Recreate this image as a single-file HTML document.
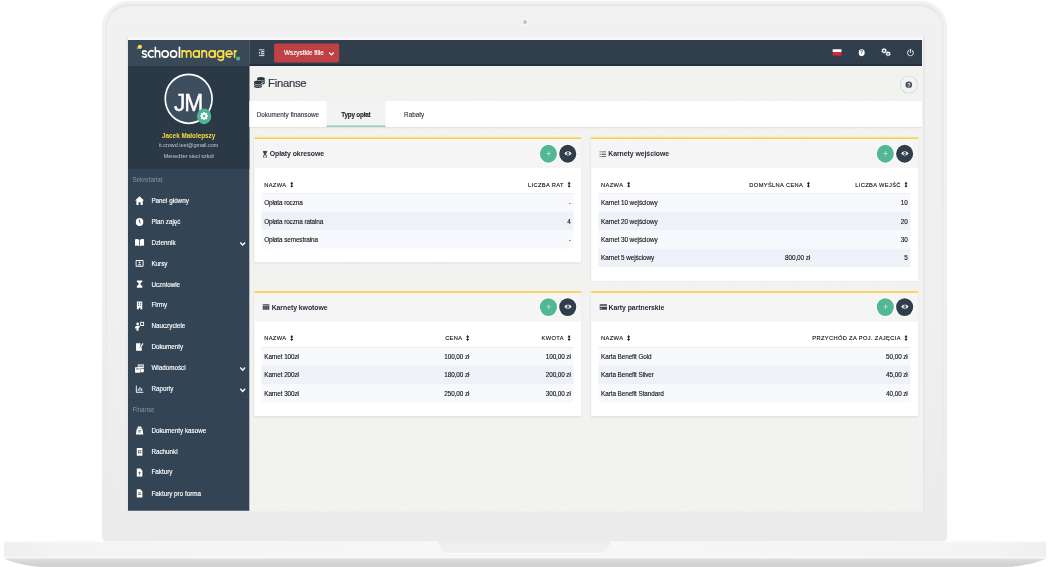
<!DOCTYPE html>
<html lang="pl">
<head>
<meta charset="utf-8">
<title>School Manager - Finanse</title>
<style>
*{box-sizing:border-box;margin:0;padding:0}
html,body{width:1050px;height:567px;overflow:hidden;background:#fff;font-family:"Liberation Sans",sans-serif}
#stage{position:relative;width:1050px;height:567px;overflow:hidden;background:#fff}
/* ---------- laptop frame ---------- */
#lid{position:absolute;left:102.2px;top:1.3px;width:844.6px;height:540.7px;border-radius:27px 27px 6px 6px;background:linear-gradient(#f1f1f1 0,#f0f0f0 55%,#ebebeb 100%);box-shadow:0 0 1.2px rgba(0,0,0,.08)}
#lid:before{content:"";position:absolute;left:2.8px;top:2.6px;right:2.8px;bottom:-4px;border-radius:24.5px 24.5px 0 0;border:2.3px solid #ebebeb;border-top-color:#e7e7e7;border-bottom:0}
#glass{position:absolute;left:125.6px;top:36px;width:799px;height:474.6px;background:linear-gradient(90deg,#e8e8e8 0,#e8e8e8 2.6px,#f4f4f4 2.6px,#f4f4f4 796.8px,#e7e7e7 796.8px,#e7e7e7 100%)}
#glassB{position:absolute;left:128px;top:510.6px;width:794.5px;height:1.9px;background:#eeeeee}
#cam{position:absolute;left:522.7px;top:19.5px;width:4.8px;height:4.8px;border-radius:50%;background:#c4c4c4;box-shadow:0 0 0 1.6px #f7f7f7}
#screenEdge{position:absolute;left:128px;top:38.3px;width:794.4px;height:3px;background:#f8f8f8}
#baseSvg{position:absolute;left:0;top:540px;width:1050px;height:27px}
/* ---------- screen ---------- */
#screen{position:absolute;left:128px;top:40px;width:794.4px;height:470.7px;overflow:hidden;background:#f2f2f1}
#app{position:absolute;left:0;top:0;width:1440px;height:817.42px;transform-origin:0 0;transform:scale(0.551389,0.576201);filter:contrast(1.0001);color:#333;font-size:13px}
/* ---------- sidebar ---------- */
#side{position:absolute;left:0;top:0;width:220px;height:817.42px;background:#334454}
#logo{position:absolute;left:0;top:0;width:220px;height:44.78px;background:#3a4958;box-shadow:inset 0 -2.5px 0 #3c4c5c}
#prof{position:absolute;left:0;top:44.78px;width:220px;height:178.58px;background:#2b3845;text-align:center;border-bottom:1.5px dashed #243140}
#av{position:absolute;left:65.65px;top:13.19px;width:88.69px;height:88.51px;border-radius:50%;border:3px solid #fff;background:#3d4e5e;color:#fff;font-size:41.5px;line-height:95.01px;text-align:center;letter-spacing:-2.3px;text-indent:-2px;-webkit-text-stroke:0.7px #fff}
#gear{position:absolute;left:124.96px;top:73.93px;width:26.12px;height:26.9px;border-radius:50%;background:#4eb592}
#gear svg{position:absolute;left:5px;top:5.5px;width:16px;height:16px}
#prof .n{position:absolute;left:0;width:220px;top:113.66px;font-size:11.5px;line-height:16px;font-weight:bold;color:#f8dc42}
#prof .e{position:absolute;left:0;width:220px;top:131.15px;font-size:9.85px;line-height:14px;color:#c4ccd3}
#prof .r{position:absolute;left:0;width:220px;top:150.41px;font-size:9.75px;line-height:14px;color:#c4ccd3}
#nav{position:absolute;left:0;top:224.57px;width:220px}
#nav .lab{height:36.27px;line-height:37.47px;padding-left:8px;font-size:11.3px;color:#8694a1}
#nav .it{position:relative;height:36.27px;line-height:37.87px;padding-left:42.5px;font-size:11.4px;color:#fff;-webkit-text-stroke:0.25px #fff;box-shadow:inset 0 1px 0 rgba(0,0,0,.055)}
#nav .it svg.ic{position:absolute;left:13px;top:10.54px;width:16px;height:15.6px;fill:#fff}
#nav .it svg.ic.big{left:12px;top:9.64px;width:18px;height:17.5px}
#nav .it svg.ch{position:absolute;left:201.8px;top:14.54px;width:12px;height:11.5px}
/* ---------- topbar ---------- */
#top{position:absolute;left:220px;top:0;width:1220px;height:44.78px;background:#313f4d;box-shadow:inset 0 -3px 0 #222f3e}
#top .ham{position:absolute;left:17.04px;top:15.62px;width:10.52px;height:12.32px}
#top .btn{position:absolute;left:44.79px;top:6.42px;width:117.88px;height:32.11px;border-radius:3px;background:#bf4144;color:#fff;-webkit-text-stroke:0.25px #fff;font-size:11.5px;line-height:32.71px;padding-left:18.14px;white-space:nowrap}
#top .btn svg{position:absolute;left:98.64px;top:11.45px;width:12px;height:11.5px}
#top .flag{position:absolute;left:1058.41px;top:15.62px;width:15.42px;height:11.8px;background:linear-gradient(#fff 0,#fff 50%,#d8283a 50%,#d8283a 100%)}
#top .q{position:absolute;left:1104.56px;top:16.34px;width:11.8px;height:11.4px;border-radius:50%;background:#fff;color:#313f4d;font-size:9px;font-weight:bold;line-height:12px;text-align:center}
#top .cog{position:absolute;left:1145.71px;top:14.37px;width:18px;height:15px}
#top .pow{position:absolute;left:1191.96px;top:14.99px;width:14px;height:13.4px}

/* ---------- main ---------- */
#main{position:absolute;left:220px;top:44.78px;width:1220px;height:772.65px}
#noise{position:absolute;left:121px;top:25px;width:673px;height:446px}
#head svg.hi{position:absolute;left:8.15px;top:19.09px;width:20.68px;height:21.52px}
#head .ht{position:absolute;left:34.09px;top:16.37px;font-size:20.5px;line-height:28px;color:#2f3742;-webkit-text-stroke:0.3px #2f3742;letter-spacing:-0.5px;white-space:nowrap}
#head .hb{position:absolute;left:1180.24px;top:17.2px;width:32px;height:31.2px;border-radius:50%;border:1px solid #c9cdd1;background:#f3f3f3}
#head .hb i{position:absolute;left:9px;top:8.8px;width:12px;height:11.6px;border-radius:50%;background:#4a5563;color:#f3f3f3;font-style:normal;font-size:9px;font-weight:bold;line-height:12px;text-align:center}
#tabs{position:absolute;left:0;top:60.92px;width:1220px;height:44.95px;background:#fff;box-shadow:0 1px 2px rgba(0,0,0,.08)}
#tabs .tb{position:absolute;top:0;height:44.95px;line-height:46.15px;font-size:11.5px;color:#2b323d;-webkit-text-stroke:0.2px #2b323d;text-align:center;white-space:nowrap}
#tabs .tb.a{background:#f3f3f3;color:#222;border-bottom:3px solid #9ad4c1;font-weight:bold;letter-spacing:-0.4px}

.card{position:absolute;width:592.5px;background:#fff;border-top:3.04px solid #f7cf48;box-shadow:0 1px 3px rgba(0,0,0,.13)}
.card .ch{position:relative;height:49.81px;background:#f5f5f6}
.card .ch .ct{position:absolute;left:15px;top:0;line-height:53.01px;font-size:12.5px;font-weight:bold;color:#252c37;white-space:nowrap;letter-spacing:-0.1px}
.card .ch svg.ci{display:inline-block;height:12.5px;margin-right:4px;vertical-align:-2px;fill:#3a4350}
.card .ch .bg,.card .ch .bd{position:absolute;top:9.14px;width:31px;height:31px;border-radius:50%;box-shadow:0 0 0 2px rgba(255,255,255,.75)}
.card .ch .bg{left:518.06px;background:#52b894}
.card .ch .bd{left:553.06px;background:#2f3d4c}
.card .ch .bg svg,.card .ch .bd svg{position:absolute;left:8.5px;top:8.5px;width:14px;height:14px}
.card table{position:absolute;left:13px;top:49.81px;width:566px;border-collapse:collapse;table-layout:fixed}
.card th{height:44.78px;padding:13.64px 5px 0 5px;font-size:10.4px;font-weight:normal;letter-spacing:0.63px;color:#111;-webkit-text-stroke:0.2px #111;text-align:left;border-bottom:1px solid #dfe4ec;white-space:nowrap;vertical-align:middle}
.card td{height:31.76px;padding:0 5px 0.9px 5px;font-size:11.6px;letter-spacing:-0.18px;color:#111;-webkit-text-stroke:0.2px #111;white-space:nowrap;vertical-align:middle}
.card .st{position:absolute;left:13px;width:566px;height:31.76px}
.card .st.o{background:#f8f9fc}
.card .st.e{background:#eef1f8}
.card .r{text-align:right}
.card th svg{display:inline-block;width:6px;height:10.5px;margin-left:6.5px;vertical-align:-1.5px}
</style>
</head>
<body>
<div id="stage">
  <div id="lid"></div>
  <div id="glass"></div>
  <div id="glassB"></div>
  <div id="cam"></div>
  <svg id="baseSvg" viewBox="0 540 1050 27">
    <defs>
      <linearGradient id="gFace" x1="0" x2="1" y1="0" y2="0"><stop offset="0" stop-color="#efefef"/><stop offset="0.060" stop-color="#f4f4f4"/><stop offset="0.500" stop-color="#f7f7f7"/><stop offset="0.940" stop-color="#f4f4f4"/><stop offset="1" stop-color="#efefef"/></linearGradient>
      <linearGradient id="gUnder" gradientUnits="userSpaceOnUse" x1="0" x2="0" y1="558.300" y2="567"><stop offset="0" stop-color="#e2e2e2"/><stop offset="0.250" stop-color="#dadada"/><stop offset="0.850" stop-color="#cfcfcf"/><stop offset="1" stop-color="#d8d8d8"/></linearGradient>
      <linearGradient id="gNotch" x1="0" x2="0" y1="0" y2="1"><stop offset="0" stop-color="#e9e9e9"/><stop offset="0.250" stop-color="#efefef"/><stop offset="1" stop-color="#f1f1f1"/></linearGradient>
    </defs>
    <path d="M4 541.600H1046V559H4z" fill="url(#gFace)"/>
    <path d="M4 541.600H1046V542.600H4z" fill="#fafafa"/>
    <path d="M4 557H1046V558.600H4z" fill="#fbfbfb"/>
    <path d="M4 558.300C10 562 24 565.500 44 567.500H1006C1026 565.500 1040 562 1046 558.300z" fill="url(#gUnder)"/>
    <path d="M439 541.600H610V545C610 550 606 553 600 553H449C443 553 439 550 439 545z" fill="url(#gNotch)"/>
    <path d="M439.500 545C439.500 550 443.500 553.300 449 553.300H600C605.500 553.300 609.500 550 609.500 545" fill="none" stroke="#fbfbfb" stroke-width="1"/>
  </svg>
  <div id="screenEdge"></div>
  <div id="screen">
    <svg id="noise"><filter id="nf" x="0" y="0" width="100%" height="100%"><feTurbulence type="fractalNoise" baseFrequency="0.550" numOctaves="2" seed="7"/><feColorMatrix type="matrix" values="0 0 0 0 0.800  0 0 0 0 0.800  0 0 0 0 0.790  2.000 0 0 0 -1.260"/></filter><rect width="100%" height="100%" filter="url(#nf)"/></svg>
    <div id="app">
      <div id="side">
        <div id="logo"></div>
        <div id="prof">
          <div id="av">JM</div>
          <div id="gear"><svg viewBox="0 0 16 16"><path fill="#fff" d="M6.800 1h2.400l.35 1.700 1.100.46 1.450-.95 1.700 1.700-.95 1.450.46 1.100L15 6.800v2.400l-1.700.35-.46 1.100.95 1.450-1.700 1.700-1.450-.95-1.100.46L9.200 15H6.800l-.35-1.700-1.100-.46-1.450.95-1.700-1.700.95-1.450-.46-1.100L1 9.200V6.800l1.700-.35.46-1.100-.95-1.450 1.700-1.700 1.450.95 1.100-.46z"/><circle cx="8" cy="8" r="2.400" fill="#4eb592"/></svg></div>
          <div class="n">Jacek Małolepszy</div>
          <div class="e">it.crowd.test@gmail.com</div>
          <div class="r">Menedżer sieci szkół</div>
        </div>
        <div id="nav">
          <div class="lab">Sekretariat</div>
          <div class="it"><svg class="ic big" viewBox="0 0 16 16"><path d="M8 1.200 15.500 8h-2.200v6.800H9.600v-4.300H6.400v4.300H2.700V8H.5z"/></svg>Panel główny</div>
          <div class="it"><svg class="ic" viewBox="0 0 16 16"><circle cx="8" cy="8" r="7"/><path d="M7.600 3.800v4.600l3 1.800" stroke="#334454" stroke-width="1.600" fill="none"/></svg>Plan zajęć</div>
          <div class="it"><svg class="ic big" viewBox="0 0 16 16"><path d="M.5 2.800c2.700-.9 4.800-.7 6.900.6v10.400C5.300 12.500 3.200 12.300.5 13.200zM15.500 2.800c-2.700-.9-4.800-.7-6.900.6v10.400c2.100-1.300 4.200-1.500 6.900-.6z"/></svg>Dziennik<svg class="ch" viewBox="0 0 11 11"><path d="M1.300 3.200 5.500 7.600 9.700 3.200" stroke="#fff" stroke-width="2.300" fill="none"/></svg></div>
          <div class="it"><svg class="ic" viewBox="0 0 16 16"><path d="M2.500 2h11A2 2 0 0 1 15.500 4v8a2 2 0 0 1-2 2h-11A2 2 0 0 1 .5 12V4A2 2 0 0 1 2.500 2z"/><path d="M2.300 3.800h11.400v8.400H2.300z" fill="#334454"/><circle cx="8" cy="6.300" r="1.700"/><path d="M4.600 11.200c.3-2.600 6.500-2.600 6.800 0z"/></svg>Kursy</div>
          <div class="it"><svg class="ic" viewBox="0 0 16 16"><path d="M3 1.500h10v3H11L9.500 7.500 11 10.500h2v4H3v-4h2l1.500-3L5 4.500H3z"/></svg>Uczniowie</div>
          <div class="it"><svg class="ic" viewBox="0 0 16 16"><path d="M3 1h10v14H9.500v-2.800h-3V15H3z"/><path d="M5 3.200h2v1.800H5zM9 3.200h2v1.800H9zM5 6.600h2v1.800H5zM9 6.600h2v1.800H9z" fill="#334454"/></svg>Firmy</div>
          <div class="it"><svg class="ic big" viewBox="0 0 16 16"><path d="M9 1h6.500v6.500H9zm1.500 1.500v3.500h3.500V2.500z"/><circle cx="4.800" cy="4.300" r="2.200"/><path d="M.5 9.800c0-3.300 8.500-3.300 8.500-1l-2.700 2V15H3v-3.500H.5z"/></svg>Nauczyciele</div>
          <div class="it"><svg class="ic" viewBox="0 0 16 16"><path d="M1.500 1.500h8v5l-2 3.500 3.500-.5 1-1.500v6.500H1.500z"/><path d="M15.300 2.300 10.500 9.500l-2 .9.300-2.100L13.500 1z"/></svg>Dokumenty</div>
          <div class="it"><svg class="ic big" viewBox="0 0 16 16"><path d="M5 1.500h10v6.500H5z"/><path d="M6 3h8M6 5h8" stroke="#334454" stroke-width="1"/><path d="M.5 6.500h9V15h-9z"/><path d="M2 9h6" stroke="#334454" stroke-width="1.200"/><circle cx="12.500" cy="11.500" r="3"/></svg>Wiadomości<svg class="ch" viewBox="0 0 11 11"><path d="M1.300 3.200 5.500 7.600 9.700 3.200" stroke="#fff" stroke-width="2.300" fill="none"/></svg></div>
          <div class="it"><svg class="ic" viewBox="0 0 16 16"><path d="M1 1.500h1.700v11.300H15v1.700H1z"/><path d="M4.500 11V7.500h1.800V11zM7.800 11V4.500h1.800V11zM11.100 11V6.500h1.800V11z"/></svg>Raporty<svg class="ch" viewBox="0 0 11 11"><path d="M1.300 3.200 5.500 7.600 9.700 3.200" stroke="#fff" stroke-width="2.300" fill="none"/></svg></div>
          <div class="lab" style="box-shadow:inset 0 1px 0 rgba(0,0,0,.07)">Finanse</div>
          <div class="it"><svg class="ic" viewBox="0 0 16 16"><path d="M5 .8h6l1.200 3.400H3.800zM2.800 5h10.400l1.800 10H1z"/><path d="M5.500 8h5M5.500 10.500h5" stroke="#334454" stroke-width="1.200"/></svg>Dokumenty kasowe</div>
          <div class="it"><svg class="ic" viewBox="0 0 16 16"><path d="M2.800 1.200h10.400v13.600H2.800z"/><path d="M5 5h6v5.500H5z" fill="#334454"/><path d="M6.200 6.200h3.600v3.100H6.200z"/></svg>Rachunki</div>
          <div class="it"><svg class="ic" viewBox="0 0 16 16"><path d="M2.800 .8h7L13.200 4.500V15.200H2.800z"/><path d="M8 6.500v5.500M6.200 8.200h3.600" stroke="#334454" stroke-width="1.400"/></svg>Faktury</div>
          <div class="it"><svg class="ic" viewBox="0 0 16 16"><path d="M2.800 .8h7L13.200 4.500V15.200H2.800z"/><path d="M5.200 7.200h5.600M5.200 10h5.600" stroke="#334454" stroke-width="1.300"/></svg>Faktury pro forma</div>
        </div>
      </div>
      <div id="top">
        <svg class="ham" viewBox="0 0 13 14" preserveAspectRatio="none"><path d="M0 0h13v2H0zM5 4h8v2H5zM5 8h8v2H5zM0 12h13v2H0zM0 4.300l3.600 2.700L0 9.700z" fill="#fff"/></svg>
        <div class="btn">Wszystkie filie<svg viewBox="0 0 11 11"><path d="M1.500 3.500 5.500 7.500 9.500 3.500" stroke="#fff" stroke-width="2" fill="none"/></svg></div>
        <div class="flag"></div>
        <div class="q">?</div>
        <svg class="cog" viewBox="0 0 18 16" preserveAspectRatio="none"><g fill="none" stroke="#fff"><circle cx="5.200" cy="5" r="2.900" stroke-width="2.400"/><circle cx="5.200" cy="5" r="4.300" stroke-width="1.300" stroke-dasharray="1.700 1.680"/><circle cx="12.600" cy="10.600" r="2.700" stroke-width="2.300"/><circle cx="12.600" cy="10.600" r="4" stroke-width="1.300" stroke-dasharray="1.600 1.540"/></g></svg>
        <svg class="pow" viewBox="0 0 14 14"><path d="M4 2.800A5.600 5.600 0 1 0 10 2.800" fill="none" stroke="#fff" stroke-width="1.800" stroke-linecap="round"/><path d="M7 .800v6" stroke="#fff" stroke-width="1.800" stroke-linecap="round"/></svg>
      </div>
      <div id="main">
        <div id="head">
          
          <span class="ht">Finanse</span>
          <span class="hb"><i>?</i></span>
        </div>
        <div id="tabs">
          <span class="tb" style="left:0;width:139.83px">Dokumenty finansowe</span>
          <span class="tb a" style="left:139.83px;width:106.82px">Typy opłat</span>
          <span class="tb" style="left:246.65px;width:104.64px">Rabaty</span>
        </div>
<div class="card" style="left:9.06px;top:124.61px;height:216.94px"><div class="ch"><span class="ct" style="top:0px"><svg class="ci" style="width:9px" viewBox="2 0 9 13" preserveAspectRatio="none"><path d="M2.300 0h8.400v1.700H10c0 2.300-1 3.600-2.300 4.800C9 7.700 10 9 10 11.300h.7V13H2.300v-1.700H3C3 9 4 7.700 5.300 6.500 4 5.300 3 4 3 1.700H2.300z"/><path d="M4.500 11.300c0-1.500.8-2.500 2-3.500 1.200 1 2 2 2 3.500z" fill="#f5f5f6"/></svg>Opłaty okresowe</span><span class="bg"><svg viewBox="0 0 14 14"><path d="M7 3v8M3 7h8" stroke="#b9e6d5" stroke-width="1.500"/></svg></span><span class="bd"><svg viewBox="0 0 14 14"><path d="M0.500 7C3 2.500 11 2.500 13.500 7 11 11.500 3 11.500 0.500 7z" fill="#fff"/><circle cx="7" cy="7" r="2.600" fill="#2f3d4c"/><circle cx="7" cy="7" r="1.100" fill="#fff"/></svg></span></div><div class="st o" style="top:94.58px"></div><div class="st e" style="top:126.34px"></div><div class="st o" style="top:158.1px"></div><table><colgroup><col style="width:340px"><col style="width:226px"></colgroup><tr><th>NAZWA<svg viewBox="0 0 6 10" preserveAspectRatio="none"><path d="M3 0 6 3.500H4V6.500H6L3 10 0 6.500H2V3.500H0z" fill="#222"/></svg></th><th class="r">LICZBA RAT<svg viewBox="0 0 6 10" preserveAspectRatio="none"><path d="M3 0 6 3.500H4V6.500H6L3 10 0 6.500H2V3.500H0z" fill="#222"/></svg></th></tr><tr class="o"><td>Opłata roczna</td><td class="r">-</td></tr><tr class="e"><td>Opłata roczna ratalna</td><td class="r">4</td></tr><tr class="o"><td>Opłata semestralna</td><td class="r">-</td></tr></table></div>
<div class="card" style="left:620.06px;top:124.61px;height:248.87px"><div class="ch"><span class="ct" style="top:0px"><svg class="ci" style="width:12px" viewBox="0 0 13 13"><path d="M0 1h2.200v2.200H0zM0 5.400h2.200v2.200H0zM0 9.800h2.200V12H0zM4 1.400h9v1.500H4zM4 5.800h9v1.500H4zM4 10.200h9v1.500H4z"/></svg>Karnety wejściowe</span><span class="bg"><svg viewBox="0 0 14 14"><path d="M7 3v8M3 7h8" stroke="#b9e6d5" stroke-width="1.500"/></svg></span><span class="bd"><svg viewBox="0 0 14 14"><path d="M0.500 7C3 2.500 11 2.500 13.500 7 11 11.500 3 11.500 0.500 7z" fill="#fff"/><circle cx="7" cy="7" r="2.600" fill="#2f3d4c"/><circle cx="7" cy="7" r="1.100" fill="#fff"/></svg></span></div><div class="st o" style="top:94.58px"></div><div class="st e" style="top:126.34px"></div><div class="st o" style="top:158.1px"></div><div class="st e" style="top:189.86px"></div><table><colgroup><col style="width:199px"><col style="width:190px"><col style="width:177px"></colgroup><tr><th>NAZWA<svg viewBox="0 0 6 10" preserveAspectRatio="none"><path d="M3 0 6 3.500H4V6.500H6L3 10 0 6.500H2V3.500H0z" fill="#222"/></svg></th><th class="r">DOMYŚLNA CENA<svg viewBox="0 0 6 10" preserveAspectRatio="none"><path d="M3 0 6 3.500H4V6.500H6L3 10 0 6.500H2V3.500H0z" fill="#222"/></svg></th><th class="r">LICZBA WEJŚĆ<svg viewBox="0 0 6 10" preserveAspectRatio="none"><path d="M3 0 6 3.500H4V6.500H6L3 10 0 6.500H2V3.500H0z" fill="#222"/></svg></th></tr><tr class="o"><td>Karnet 10 wejściowy</td><td class="r"></td><td class="r">10</td></tr><tr class="e"><td>Karnet 20 wejściowy</td><td class="r"></td><td class="r">20</td></tr><tr class="o"><td>Karnet 30 wejściowy</td><td class="r"></td><td class="r">30</td></tr><tr class="e"><td>Karnet 5 wejściowy</td><td class="r">800,00 zł</td><td class="r">5</td></tr></table></div>
<div class="card" style="left:9.06px;top:391.01px;height:217.11px"><div class="ch"><span class="ct" style="top:-1.2px"><svg class="ci" style="width:12.5px" viewBox="0 0 13 13" preserveAspectRatio="none"><path d="M0 1.500h13v10H0z"/><path d="M0 4h13" stroke="#f5f5f6" stroke-width=".8"/><path d="M3.200 4v7.500M6.500 4v7.500M9.800 4v7.500" stroke="#f5f5f6" stroke-width=".5"/></svg>Karnety kwotowe</span><span class="bg"><svg viewBox="0 0 14 14"><path d="M7 3v8M3 7h8" stroke="#b9e6d5" stroke-width="1.500"/></svg></span><span class="bd"><svg viewBox="0 0 14 14"><path d="M0.500 7C3 2.500 11 2.500 13.500 7 11 11.500 3 11.500 0.500 7z" fill="#fff"/><circle cx="7" cy="7" r="2.600" fill="#2f3d4c"/><circle cx="7" cy="7" r="1.100" fill="#fff"/></svg></span></div><div class="st o" style="top:94.58px"></div><div class="st e" style="top:126.34px"></div><div class="st o" style="top:158.1px"></div><table><colgroup><col style="width:199px"><col style="width:183px"><col style="width:184px"></colgroup><tr><th>NAZWA<svg viewBox="0 0 6 10" preserveAspectRatio="none"><path d="M3 0 6 3.500H4V6.500H6L3 10 0 6.500H2V3.500H0z" fill="#222"/></svg></th><th class="r">CENA<svg viewBox="0 0 6 10" preserveAspectRatio="none"><path d="M3 0 6 3.500H4V6.500H6L3 10 0 6.500H2V3.500H0z" fill="#222"/></svg></th><th class="r">KWOTA<svg viewBox="0 0 6 10" preserveAspectRatio="none"><path d="M3 0 6 3.500H4V6.500H6L3 10 0 6.500H2V3.500H0z" fill="#222"/></svg></th></tr><tr class="o"><td>Karnet 100zł</td><td class="r">100,00 zł</td><td class="r">100,00 zł</td></tr><tr class="e"><td>Karnet 200zł</td><td class="r">180,00 zł</td><td class="r">200,00 zł</td></tr><tr class="o"><td>Karnet 300zł</td><td class="r">250,00 zł</td><td class="r">300,00 zł</td></tr></table></div>
<div class="card" style="left:620.06px;top:391.01px;height:217.11px"><div class="ch"><span class="ct" style="top:-1.2px"><svg class="ci" style="width:14px;margin-right:2.400px" viewBox="0 0 13 13" preserveAspectRatio="none"><path d="M1 1.500h11a1 1 0 0 1 1 1v8a1 1 0 0 1-1 1H1a1 1 0 0 1-1-1v-8a1 1 0 0 1 1-1z"/><path d="M0 4.200h13v1.800H0z" fill="#f5f5f6"/><path d="M1.500 8.800h3v1.200h-3z" fill="#f5f5f6"/></svg>Karty partnerskie</span><span class="bg"><svg viewBox="0 0 14 14"><path d="M7 3v8M3 7h8" stroke="#b9e6d5" stroke-width="1.500"/></svg></span><span class="bd"><svg viewBox="0 0 14 14"><path d="M0.500 7C3 2.500 11 2.500 13.500 7 11 11.500 3 11.500 0.500 7z" fill="#fff"/><circle cx="7" cy="7" r="2.600" fill="#2f3d4c"/><circle cx="7" cy="7" r="1.100" fill="#fff"/></svg></span></div><div class="st o" style="top:94.58px"></div><div class="st e" style="top:126.34px"></div><div class="st o" style="top:158.1px"></div><table><colgroup><col style="width:199px"><col style="width:367px"></colgroup><tr><th>NAZWA<svg viewBox="0 0 6 10" preserveAspectRatio="none"><path d="M3 0 6 3.500H4V6.500H6L3 10 0 6.500H2V3.500H0z" fill="#222"/></svg></th><th class="r">PRZYCHÓD ZA POJ. ZAJĘCIA<svg viewBox="0 0 6 10" preserveAspectRatio="none"><path d="M3 0 6 3.500H4V6.500H6L3 10 0 6.500H2V3.500H0z" fill="#222"/></svg></th></tr><tr class="o"><td>Karta Benefit Gold</td><td class="r">50,00 zł</td></tr><tr class="e"><td>Karta Benefit Silver</td><td class="r">45,00 zł</td></tr><tr class="o"><td>Karta Benefit Standard</td><td class="r">40,00 zł</td></tr></table></div>
      </div>
    </div>
    <svg id="logoSvg" viewBox="128 40 121 26" style="position:absolute;left:0;top:0;width:121px;height:26px">
      <g fill="none" stroke="#fff" stroke-width="1.550" stroke-linecap="butt" stroke-linejoin="round">
        <path d="M146.550 52.200C146.100 51.250 145.400 50.850 144.450 50.850C143.250 50.850 142.500 51.550 142.500 52.450C142.500 53.450 143.300 53.800 144.500 54.100C145.800 54.420 146.550 54.850 146.550 55.700C146.550 56.550 145.650 57.100 144.500 57.100C143.400 57.100 142.650 56.650 142.250 55.800"/>
        <path d="M153.600 51.650A3.100 3.130 0 1 0 153.600 56.300"/>
        <path d="M155.350 46.700V57.850M155.350 53.600C155.350 51.800 156.250 50.850 157.600 50.850C158.900 50.850 159.750 51.800 159.750 53.400V57.850"/>
        <ellipse cx="165.150" cy="53.980" rx="3.100" ry="3.130"/>
        <ellipse cx="173.550" cy="53.980" rx="3.100" ry="3.130"/>
        <path d="M179.450 46.700V57.850" stroke-width="1.650"/>
      </g>
      <g fill="none" stroke="#fbde45" stroke-width="1.550" stroke-linecap="butt" stroke-linejoin="round">
        <path d="M182.100 50.100V57.850M182.100 53.200C182.100 51.700 183 50.850 184.300 50.850C185.700 50.850 186.550 51.700 186.550 53.200V57.850M186.550 53.200C186.550 51.700 187.400 50.850 188.750 50.850C190.100 50.850 190.950 51.700 190.950 53.200V57.850"/>
        <ellipse cx="196.350" cy="53.980" rx="3.050" ry="3.130"/><path d="M199.250 50.100V57.850"/>
        <path d="M201.950 50.100V57.850M201.950 53.400C201.950 51.800 202.900 50.850 204.250 50.850C205.600 50.850 206.550 51.800 206.550 53.400V57.850"/>
        <ellipse cx="212.050" cy="53.980" rx="3.050" ry="3.130"/><path d="M215.050 50.100V57.850"/>
        <ellipse cx="220.450" cy="53.980" rx="3.050" ry="3.130"/><path d="M223.500 50.100V58C223.500 59.600 222.400 60.350 220.700 60.350C219.400 60.350 218.400 59.850 217.850 58.950"/>
        <path d="M226.100 54.100H232.200A3.100 3.130 0 1 0 231.300 56.200"/>
        <path d="M234.550 50.100V57.850M234.550 53.300C234.550 51.700 235.350 50.950 236.850 50.950"/>
      </g>
      <circle cx="137.600" cy="48.300" r="1.050" fill="#4eb592"/>
      <circle cx="139.900" cy="46.800" r="2.150" fill="#fbde45"/>
      <circle cx="238.100" cy="58.500" r="2.100" fill="#4eb592"/>
    </svg>
    <svg id="coinSvg" viewBox="252 75 15 15" style="position:absolute;left:124px;top:35px;width:15px;height:15px">
      <g fill="#2c343f">
        <path d="M257 78.500A3.900 1.600 0 0 1 264.800 78.500V83A3.900 1.600 0 0 1 257 83z"/>
        <path d="M257 79.450A3.900 1.600 0 0 0 264.800 79.450M257 81.400A3.900 1.600 0 0 0 264.800 81.400" fill="none" stroke="#f2f2f1" stroke-width=".5"/>
        <path d="M254.050 82.200A3.900 1.600 0 0 1 261.850 82.200V86.300A3.900 1.600 0 0 1 254.050 86.300z" stroke="#f2f2f1" stroke-width=".9"/>
        <path d="M254.050 82.200A3.900 1.600 0 0 1 261.850 82.200V86.300A3.900 1.600 0 0 1 254.050 86.300z"/>
        <path d="M254.050 83.050A3.900 1.600 0 0 0 261.850 83.050M254.050 84.800A3.900 1.600 0 0 0 261.850 84.800" fill="none" stroke="#f2f2f1" stroke-width=".5"/>
      </g>
    </svg>
  </div>
</div>
</body>
</html>
